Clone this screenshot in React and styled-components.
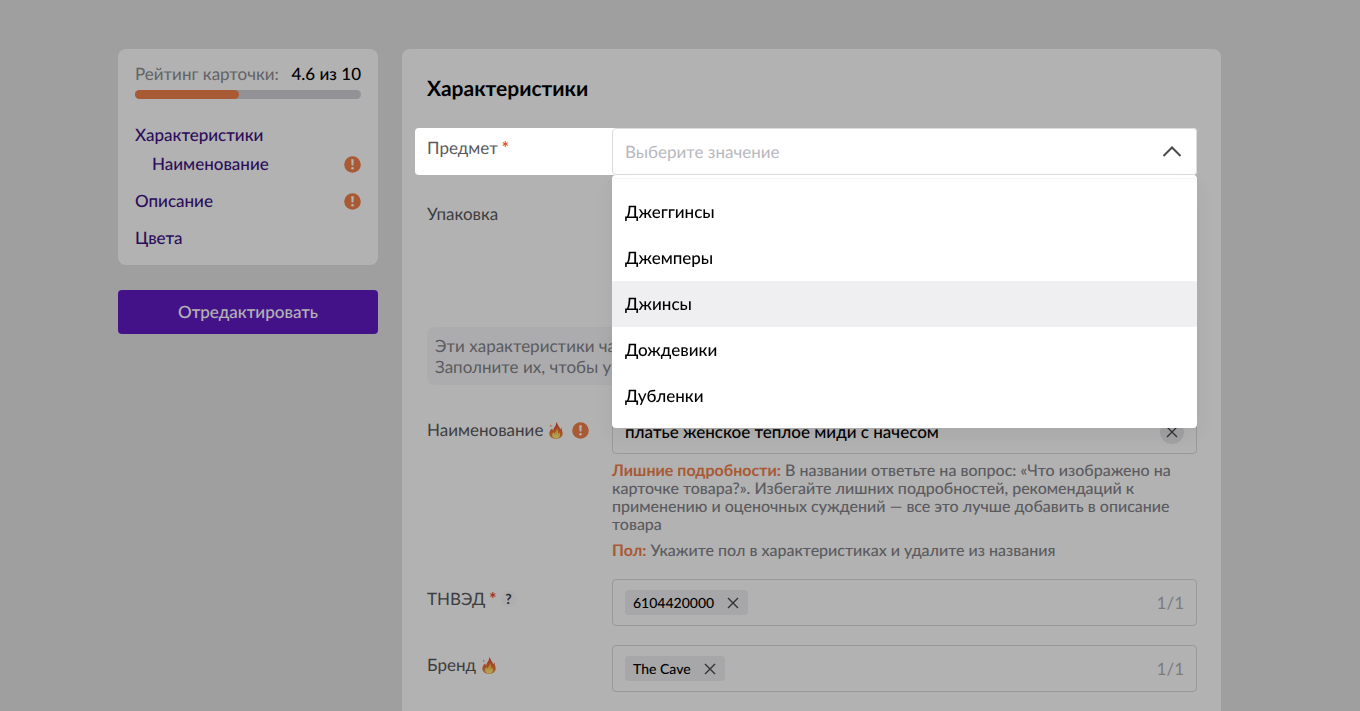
import React, { useState } from 'react';
import styled, { createGlobalStyle } from 'styled-components';

const GlobalStyle = createGlobalStyle`
  * {
    box-sizing: border-box;
  }

  body {
    margin: 0;
    background: #e4e4e4;
    color: #000;
    font-family: Lato, "Open Sans", sans-serif;
    font-size: 17px;
    line-height: 22px;
    text-rendering: geometricPrecision;
  }

  button, input {
    font: inherit;
    color: inherit;
    text-rendering: inherit;
  }
`

const Page = styled.div`
  display: flex;
  align-items: stretch;
  gap: 24px;
  min-height: 100vh;
  padding: 49px 139px 0 118px;
`

const Shade = styled.div`
  position: fixed;
  inset: 0;
  z-index: 1;
  background: rgba(0, 0, 0, 0.3);
`

const Sidebar = styled.aside`
  flex: 0 0 260px;
`

const RatingCard = styled.section`
  padding: 14px 17px 16px;
  border-radius: 8px;
  background: #fff;
`

const RatingLine = styled.div`
  display: flex;
  justify-content: space-between;
  color: #8e8e92;
`

const RatingValue = styled.span`
  color: #000;
  font-weight: 500;
`

const Track = styled.div`
  height: 9px;
  margin: 5px 0 25px;
  border-radius: 5px;
  background: #d1d0d6;
`

const TrackFill = styled.div`
  height: 100%;
  border-radius: 5px;
  background: #f1814c;
`

const Nav = styled.nav`
  display: flex;
  flex-direction: column;
`

const NavLink = styled.a`
  display: flex;
  align-items: center;
  justify-content: space-between;
  margin-top: ${props => (props.$nested ? '7px' : '15px')};
  padding-left: ${props => (props.$nested ? '17px' : '0')};
  color: #3d1383;
  font-weight: 500;
  text-decoration: none;

  &:first-child {
    margin-top: 0;
  }
`

const SubmitButton = styled.button`
  width: 100%;
  height: 44px;
  margin-top: 25px;
  border: 0;
  border-radius: 4px;
  background: #611ac5;
  color: #fff;
  font-weight: 500;
  cursor: pointer;
`

const Panel = styled.main`
  flex: 1;
  min-width: 0;
  padding: 26px 24px 19px 25px;
  border-radius: 8px 8px 0 0;
  background: #fff;
`

const Title = styled.h1`
  margin: 0 0 25px;
  font-size: 21px;
  line-height: 28px;
  font-weight: 700;
`

const Row = styled.div`
  display: grid;
  grid-template-columns: 185px 1fr;
  margin-bottom: 19px;
  min-height: ${props => (props.$tall ? '114px' : '0')};

  &:last-child {
    margin-bottom: 0;
  }
`

const ActiveRow = styled(Row)`
  position: relative;
  z-index: 2;
  margin-left: -12px;
  padding-left: 12px;
  border-radius: 4px;
  background: #fff;
`

const LabelCell = styled.div`
  display: flex;
  align-items: center;
  height: 22px;
  margin-top: 9px;
  color: #59595c;
`

const Star = styled.span`
  margin-left: 4px;
  color: #f0463c;
  font-weight: 700;
`

const LabelIcon = styled.span`
  display: flex;
  margin-left: ${props => (props.$wide ? '9px' : '6px')};
`

const HelpButton = styled.button`
  width: 16px;
  height: 16px;
  margin-left: 4px;
  padding: 0;
  border: 0;
  border-radius: 50%;
  background: #f9f9fa;
  color: #3c3c40;
  font-size: 14px;
  line-height: 16px;
  font-weight: 700;
`

const Field = styled.div`
  position: relative;
  display: flex;
  align-items: center;
  height: ${props => (props.$low ? '44px' : '47px')};
  padding: 0 12px;
  border: 1px solid #dcdcdf;
  border-radius: 4px;
  background: #fff;
`

const TextInput = styled.input`
  flex: 1;
  min-width: 0;
  padding: 0;
  border: 0;
  outline: 0;
  background: transparent;
  font-weight: 500;

  &::placeholder {
    color: #b8b8be;
    font-weight: 400;
    opacity: 1;
  }
`

const IconButton = styled.button`
  display: flex;
  align-items: center;
  justify-content: center;
  width: 24px;
  height: 24px;
  padding: 0;
  border: 0;
  border-radius: 50%;
  background: ${props => (props.$filled ? '#e9e9ec' : 'transparent')};
  color: #4a4a4d;
  cursor: pointer;
`

const Menu = styled.div`
  position: absolute;
  top: 46px;
  left: -1px;
  right: -1px;
  padding-top: 3px;
  border-radius: 4px;
  background: #fff;
  box-shadow: 0 8px 20px rgba(0, 0, 0, 0.06);
`

const Options = styled.ul`
  margin: 0;
  padding: 10px 0 9px;
  border-top: 1px solid #f4f4f4;
  border-radius: 4px;
  list-style: none;
`

const Option = styled.li`
  padding: 12px 13px;
  background: ${props => (props.$active ? '#efeff1' : 'transparent')};
  font-weight: 500;
  cursor: pointer;
`

const Note = styled.p`
  margin: 0 0 25px;
  padding: 8px;
  border-radius: 8px;
  background: #f7f7f9;
  color: #838389;
  line-height: 21px;
`

const Hint = styled.p`
  margin: 8px 0 0;
  color: #838389;
  font-size: 16px;
  line-height: 18px;
  font-weight: 500;

  b {
    color: #f1814c;
    font-weight: 700;
  }
`

const Chip = styled.span`
  display: flex;
  align-items: center;
  gap: 4px;
  height: 25px;
  padding-left: 8px;
  border-radius: 4px;
  background: #efeff2;
  font-size: 14px;
  font-weight: 500;
`

const ChipRemove = styled(IconButton)`
  width: 30px;
`

const Counter = styled.span`
  margin-left: auto;
  color: #b2b2b7;
`

const AlertIcon = () => (
  <svg width="17" height="17" viewBox="0 0 17 17" aria-hidden="true">
    <circle cx="8.5" cy="8.5" r="8.3" fill="#f1814c" />
    <path d="M7.2 3.300h2.600l-.4 6.300H7.600z" fill="#fff" />
    <circle cx="8.5" cy="12.2" r="1.3" fill="#fff" />
  </svg>
)

const FireIcon = () => (
  <svg width="14" height="17" viewBox="0 0 14 17" aria-hidden="true">
    <defs>
      <linearGradient id="flame" x1="0" y1="0" x2="0" y2="1">
        <stop offset="0" stopColor="#dc4a32" />
        <stop offset="0.55" stopColor="#ee6c38" />
        <stop offset="1" stopColor="#f29a3c" />
      </linearGradient>
      <linearGradient id="flameCore" x1="0" y1="0" x2="0" y2="1">
        <stop offset="0" stopColor="#f7a43c" />
        <stop offset="0.6" stopColor="#fbd65c" />
        <stop offset="1" stopColor="#fdf08c" />
      </linearGradient>
    </defs>
    <path d="M7 0c.4 1.800 0 3-1 4.400C5 5.800 4.300 7 4.300 8.500c-.7-.4-1-1.100-1.100-2C1.400 7.900.3 9.600.3 11.600.3 14.800 3.100 17 7 17s6.700-2.200 6.700-5.400c0-1.700-.7-2.800-.9-3.900-.2-1 0-1.600.3-2.300-1 .5-1.500 1.300-1.700 2.200-.3-1.200-.8-2-1.400-2.800C9 3.500 8.800 1.400 7 0z" fill="url(#flame)" />
    <path d="M1.600 2.600c.8.800 1 1.700.5 2.700-.8-.7-1-1.700-.5-2.700z" fill="#ee6c38" />
    <path d="M7.900 5.500c.3 2.200-.7 3.200-1.500 4.300-.4.600-.6 1.200-.5 1.900-.7-.3-1.200-.8-1.300-1.600-1 1-1.600 2-1.500 3.200.2 1.900 1.700 3.100 3.900 3.100s3.900-1.200 4-3.200c.1-1.200-.3-2.200-.7-2.900-.2.700-.5 1.200-1.100 1.500.3-2.400 0-4.800-1.300-6.300z" fill="url(#flameCore)" />
  </svg>
)

const CrossIcon = () => (
  <svg width="12" height="12" viewBox="0 0 12 12" fill="none" stroke="currentColor" strokeWidth="1.4" aria-hidden="true">
    <path d="M1 1l10 10M11 1L1 11" />
  </svg>
)

const ChevronUp = () => (
  <svg width="20" height="12" viewBox="0 0 20 12" fill="none" stroke="currentColor" strokeWidth="2" aria-hidden="true">
    <path d="M1.500 10L10 1.500l8.500 8.500" />
  </svg>
)

const options = ['Джеггинсы', 'Джемперы', 'Джинсы', 'Дождевики', 'Дубленки']

const links = [
  { text: 'Характеристики' },
  { text: 'Наименование', nested: true, alert: true },
  { text: 'Описание', alert: true },
  { text: 'Цвета' },
]

const ChipField = ({ value }) => {
  const [shown, setShown] = useState(true)
  return (
    <Field>
      {shown && (
        <Chip>
          {value}
          <ChipRemove type="button" aria-label={`Удалить ${value}`} onClick={() => setShown(false)}>
            <CrossIcon />
          </ChipRemove>
        </Chip>
      )}
      <Counter>{shown ? '1/1' : '0/1'}</Counter>
    </Field>
  )
}

const App = () => {
  const [open, setOpen] = useState(true)
  const [active, setActive] = useState('Джинсы')
  const [subject, setSubject] = useState('')
  const [name, setName] = useState('платье женское теплое миди с начесом')
  const rating = 4.6

  const choose = (option) => {
    setSubject(option)
    setOpen(false)
  }

  return (
    <>
      <GlobalStyle />
      <Page>
        <Sidebar>
          <RatingCard>
            <RatingLine>
              Рейтинг карточки:
              <RatingValue>{rating} из 10</RatingValue>
            </RatingLine>
            <Track>
              <TrackFill style={{ width: `${rating * 10}%` }} />
            </Track>
            <Nav>
              {links.map(link => (
                <NavLink key={link.text} href="#" $nested={link.nested}>
                  {link.text}
                  {link.alert && <AlertIcon />}
                </NavLink>
              ))}
            </Nav>
          </RatingCard>
          <SubmitButton type="button">Отредактировать</SubmitButton>
        </Sidebar>

        <Panel>
          <Title>Характеристики</Title>

          <ActiveRow>
            <LabelCell>
              <label htmlFor="subject">Предмет</label>
              <Star>*</Star>
            </LabelCell>
            <Field>
              <TextInput
                id="subject"
                role="combobox"
                aria-expanded={open}
                aria-controls="subject-options"
                placeholder="Выберите значение"
                value={subject}
                onChange={e => setSubject(e.target.value)}
              />
              <IconButton type="button" aria-label="Список предметов" onClick={() => setOpen(!open)}>
                <ChevronUp />
              </IconButton>
              {open && (
                <Menu>
                  <Options id="subject-options" role="listbox">
                    {options.map(option => (
                      <Option
                        key={option}
                        role="option"
                        aria-selected={option === active}
                        $active={option === active}
                        onMouseEnter={() => setActive(option)}
                        onClick={() => choose(option)}
                      >
                        {option}
                      </Option>
                    ))}
                  </Options>
                </Menu>
              )}
            </Field>
          </ActiveRow>

          <Row $tall>
            <LabelCell>Упаковка</LabelCell>
          </Row>

          <Note>
            Эти характеристики часто<br />
            Заполните их, чтобы увеличить
          </Note>

          <Row>
            <LabelCell>
              <label htmlFor="name">Наименование</label>
              <LabelIcon><FireIcon /></LabelIcon>
              <LabelIcon $wide><AlertIcon /></LabelIcon>
            </LabelCell>
            <div>
              <Field $low>
                <TextInput id="name" value={name} onChange={e => setName(e.target.value)} />
                <IconButton type="button" $filled aria-label="Очистить" onClick={() => setName('')}>
                  <CrossIcon />
                </IconButton>
              </Field>
              <Hint>
                <b>Лишние подробности:</b> В названии ответьте на вопрос: «Что изображено на карточке товара?». Избегайте лишних подробностей, рекомендаций к применению и оценочных суждений — все это лучше добавить в описание товара
              </Hint>
              <Hint>
                <b>Пол:</b> Укажите пол в характеристиках и удалите из названия
              </Hint>
            </div>
          </Row>

          <Row>
            <LabelCell>
              ТНВЭД
              <Star>*</Star>
              <HelpButton type="button">?</HelpButton>
            </LabelCell>
            <ChipField value="6104420000" />
          </Row>

          <Row>
            <LabelCell>
              Бренд
              <LabelIcon><FireIcon /></LabelIcon>
            </LabelCell>
            <ChipField value="The Cave" />
          </Row>
        </Panel>
        <Shade />
      </Page>
    </>
  )
}

export default App
